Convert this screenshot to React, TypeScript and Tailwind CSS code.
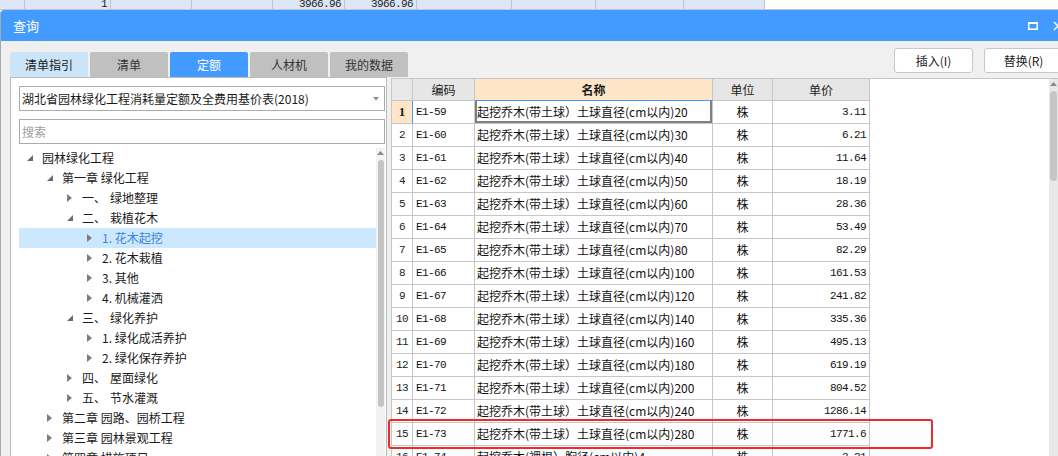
import React from 'react';

type TreeNode = {
  level: number;
  open?: boolean;
  text?: string;
  num?: string;
  name?: string;
  selected?: boolean;
};

const strip = [
  { w: 'w-[25px]', t: '' },
  { w: 'w-[86px]', t: '1' },
  { w: 'w-[81px]', t: '' },
  { w: 'w-[81px]', t: '' },
  { w: 'w-[72px]', t: '3966.96' },
  { w: 'w-[72px]', t: '3966.96' },
  { w: 'w-[95px]', t: '' },
  { w: 'w-[84px]', t: '' },
  { w: 'w-[88px]', t: '' },
  { w: 'w-[81px]', t: '' },
];

const tree: TreeNode[] = [
  { level: 0, open: true, text: '园林绿化工程' },
  { level: 1, open: true, text: '第一章 绿化工程' },
  { level: 2, num: '一、', name: '绿地整理' },
  { level: 2, open: true, num: '二、', name: '栽植花木' },
  { level: 3, text: '1. 花木起挖', selected: true },
  { level: 3, text: '2. 花木栽植' },
  { level: 3, text: '3. 其他' },
  { level: 3, text: '4. 机械灌洒' },
  { level: 2, open: true, num: '三、', name: '绿化养护' },
  { level: 3, text: '1. 绿化成活养护' },
  { level: 3, text: '2. 绿化保存养护' },
  { level: 2, num: '四、', name: '屋面绿化' },
  { level: 2, num: '五、', name: '节水灌溉' },
  { level: 1, text: '第二章 园路、园桥工程' },
  { level: 1, text: '第三章 园林景观工程' },
  { level: 1, text: '第四章 措施项目' },
];

const indent = ['pl-[8px]', 'pl-[28px]', 'pl-[48px]', 'pl-[68px]'];

const rows = [
  ['E1-59', '起挖乔木(带土球）土球直径(cm以内)20', '3.11'],
  ['E1-60', '起挖乔木(带土球）土球直径(cm以内)30', '6.21'],
  ['E1-61', '起挖乔木(带土球）土球直径(cm以内)40', '11.64'],
  ['E1-62', '起挖乔木(带土球）土球直径(cm以内)50', '18.19'],
  ['E1-63', '起挖乔木(带土球）土球直径(cm以内)60', '28.36'],
  ['E1-64', '起挖乔木(带土球）土球直径(cm以内)70', '53.49'],
  ['E1-65', '起挖乔木(带土球）土球直径(cm以内)80', '82.29'],
  ['E1-66', '起挖乔木(带土球）土球直径(cm以内)100', '161.53'],
  ['E1-67', '起挖乔木(带土球）土球直径(cm以内)120', '241.82'],
  ['E1-68', '起挖乔木(带土球）土球直径(cm以内)140', '335.36'],
  ['E1-69', '起挖乔木(带土球）土球直径(cm以内)160', '495.13'],
  ['E1-70', '起挖乔木(带土球）土球直径(cm以内)180', '619.19'],
  ['E1-71', '起挖乔木(带土球）土球直径(cm以内)200', '804.52'],
  ['E1-72', '起挖乔木(带土球）土球直径(cm以内)240', '1286.14'],
  ['E1-73', '起挖乔木(带土球）土球直径(cm以内)280', '1771.6'],
  ['E1-74', '起挖乔木(裸根）胸径(cm以内)4', '3.21'],
];

const mono = "font-['Liberation_Mono','Noto_Sans_CJK_SC',monospace] text-[11px] tracking-[-0.6px]";
const cell = 'h-full border-r border-b border-[#c6c6c6] flex items-center';

const Arrow = ({ open }: { open?: boolean }) =>
  open ? (
    <svg width="6" height="6" viewBox="0 0 6 6">
      <polygon points="6,0 6,6 0,6" fill="#6b6b6b" />
    </svg>
  ) : (
    <svg width="5" height="8" viewBox="0 0 5 8">
      <polygon points="0,0 5,4 0,8" fill="#7d7d7d" />
    </svg>
  );

const tabs = [
  { label: '清单指引', cls: 'bg-[#cce4f7] text-[#222]' },
  { label: '清单', cls: 'bg-[#c0c0c0] text-[#333]' },
  { label: '定额', cls: 'bg-[#449bff] text-white' },
  { label: '人材机', cls: 'bg-[#c0c0c0] text-[#333]' },
  { label: '我的数据', cls: 'bg-[#c0c0c0] text-[#333]' },
];

export default function App() {
  return (
    <div className="w-[1058px] h-[456px] overflow-hidden bg-white relative font-['Noto_Sans_CJK_SC',sans-serif] text-[12px] text-[#1a1a1a]">
      {/* sheet row behind the dialog */}
      <div className="flex h-[10px] overflow-hidden">
        {strip.map((c, i) => (
          <div
            key={i}
            className={`${c.w} h-[10px] shrink-0 bg-[#dce8fa] border-r border-b border-[#c4c4c4] flex items-end justify-end pr-[3px] ${mono} leading-[10px] text-[#222]`}
          >
            {c.t}
          </div>
        ))}
        <div className="flex-1 h-[10px] bg-white border-b border-[#c4c4c4]" />
      </div>

      {/* dialog */}
      <div className="flex flex-col h-[446px] border-l border-[#a8a8a8] rounded-tl-[4px] overflow-hidden bg-[#f0f0f0]">
        <div className="h-[31px] shrink-0 bg-[#449bff] flex items-center pl-[12px] text-white text-[13px]">
          <span>查询</span>
          <div className="ml-auto flex items-center gap-[15px] -mr-[5px]">
            <svg width="10" height="8" viewBox="0 0 10 8">
              <rect x="0.75" y="1" width="8.5" height="6.25" fill="none" stroke="white" strokeWidth="1.5" />
              <rect x="0" y="0" width="10" height="2" fill="white" />
            </svg>
            <svg width="10" height="10" viewBox="0 0 10 10">
              <path d="M1 1 L9 9 M9 1 L1 9" stroke="white" strokeWidth="1.5" />
            </svg>
          </div>
        </div>

        {/* tabs and buttons */}
        <div className="h-[36px] shrink-0 flex">
          <div className="self-end flex gap-[2px] pl-[9px]">
            {tabs.map((t) => (
              <div
                key={t.label}
                className={`w-[78px] h-[25px] rounded-t-[2px] flex items-center justify-center text-[12px] ${t.cls}`}
              >
                {t.label}
              </div>
            ))}
          </div>
          <div className="ml-auto mt-[7px] flex gap-[11px] -mr-[5px]">
            <button className="w-[79px] h-[25px] bg-white border border-[#c8c8c8] rounded-[3px] text-[12px] text-[#222]">
              插入(I)
            </button>
            <button className="w-[79px] h-[25px] bg-white border border-[#c8c8c8] rounded-[3px] text-[12px] text-[#222]">
              替换(R)
            </button>
          </div>
        </div>

        {/* content */}
        <div className="flex-1 min-h-0 flex pl-[9px]">
          {/* left panel */}
          <div className="w-[377px] shrink-0 bg-white border border-b-0 border-[#bcbcbc] flex flex-col pt-[8px] pl-[8px] pr-[1px]">
            <div className="h-[25px] shrink-0 border border-[#ababab] flex items-center pl-[2px] pr-[5px]">
              <span className="text-[12px] text-[#1a1a1a]">湖北省园林绿化工程消耗量定额及全费用基价表(2018)</span>
              <svg className="ml-auto" width="6" height="4" viewBox="0 0 6 4">
                <polygon points="0,0 6,0 3,3.5" fill="#8a8a8a" />
              </svg>
            </div>
            <div className="h-[25px] shrink-0 mt-[8px] border border-[#ababab] flex items-center pl-[2px] text-[12px] text-[#a0a0a0]">
              搜索
            </div>
            <div className="flex-1 min-h-0 flex mt-[4px]">
              <div className="flex-1 flex flex-col">
                {tree.map((n, i) => (
                  <div
                    key={i}
                    className={`h-[20px] shrink-0 flex items-center ${indent[n.level]} ${n.selected ? 'bg-[#cce8ff] text-[#3d84d8]' : ''}`}
                  >
                    <div className="w-[15px] shrink-0 flex items-center">
                      <Arrow open={n.open} />
                    </div>
                    {n.text ? (
                      <span className="whitespace-pre">{n.text}</span>
                    ) : (
                      <span className="flex">
                        <span>{n.num}</span>
                        <span className="ml-[4px]">{n.name}</span>
                      </span>
                    )}
                  </div>
                ))}
              </div>
              <div className="w-[9px] shrink-0 bg-[#f2f2f2] flex flex-col items-center">
                <svg className="mt-[3px]" width="7" height="4" viewBox="0 0 7 4">
                  <polygon points="0,4 7,4 3.5,0" fill="#8a8a8a" />
                </svg>
                <div className="w-[6px] h-[247px] mt-[5px] rounded-full bg-[#c4c4c4]" />
              </div>
            </div>
          </div>

          {/* table */}
          <div className="flex-1 min-w-0 ml-[4px] mt-[1px] bg-white border-t border-l border-[#c6c6c6] flex">
            <div className="w-[478px] shrink-0 flex flex-col">
              <div className="h-[22px] shrink-0 flex">
                <div className={`w-[21px] ${cell} bg-[#e9e9e9]`} />
                <div className={`w-[62px] ${cell} bg-[#e6e6e6] justify-center`}>编码</div>
                <div className={`w-[238px] ${cell} bg-[#fde5c7] justify-center font-bold border-b-[#4499ff]`}>名称</div>
                <div className={`w-[60px] ${cell} bg-[#e6e6e6] justify-center`}>单位</div>
                <div className={`w-[97px] ${cell} bg-[#e6e6e6] justify-center`}>单价</div>
              </div>
              {rows.map((r, i) => {
                const first = i === 0;
                return (
                  <div key={r[0]} className="h-[23px] shrink-0 flex">
                    <div
                      className={`w-[21px] ${cell} justify-center ${
                        first
                          ? "bg-[#fde5c7] border-r-[#4499ff] font-['Liberation_Serif',serif] font-bold text-[13px]"
                          : `${mono} text-[#222]`
                      }`}
                    >
                      {i + 1}
                    </div>
                    <div className={`w-[62px] ${cell} pl-[3px] ${mono} text-[#111]`}>{r[0]}</div>
                    <div
                      className={`w-[238px] ${cell} pl-[2px] whitespace-nowrap overflow-hidden text-[#111] ${
                        first ? 'shadow-[inset_2px_0_0_#808080,inset_-2px_0_0_#808080,inset_0_-2px_0_#808080]' : ''
                      }`}
                    >
                      {r[1]}
                    </div>
                    <div className={`w-[60px] ${cell} justify-center text-[#111]`}>株</div>
                    <div className={`w-[97px] ${cell} justify-end pr-[3px] ${mono} text-[#111]`}>{r[2]}</div>
                  </div>
                );
              })}
            </div>
            <div className="flex-1 bg-white" />
            <div className="w-[9px] shrink-0 bg-[#e8e8e8] flex flex-col items-center">
              <svg className="mt-[3px]" width="7" height="4" viewBox="0 0 7 4">
                <polygon points="0,4 7,4 3.5,0" fill="#8a8a8a" />
              </svg>
              <div className="w-[7px] h-[90px] mt-[5px] rounded-full bg-[#c6c6c6]" />
            </div>
          </div>
        </div>
      </div>

      {/* highlight drawn over the table */}
      <div className="absolute left-[388px] top-[419px] w-[545px] h-[30px] border-2 border-[#f02a2a] rounded-[3px]" />
    </div>
  );
}
